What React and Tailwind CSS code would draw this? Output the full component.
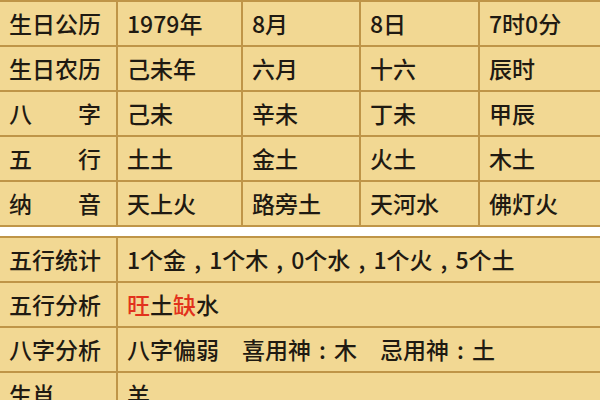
import React from "react";

const top = [
  ["生日公历", "1979年", "8月", "8日", "7时0分"],
  ["生日农历", "己未年", "六月", "十六", "辰时"],
  [["八", "字"], "己未", "辛未", "丁未", "甲辰"],
  [["五", "行"], "土土", "金土", "火土", "木土"],
  [["纳", "音"], "天上火", "路旁土", "天河水", "佛灯火"],
];

function Label({ v }) {
  if (Array.isArray(v)) {
    return (
      <div className="flex h-full items-center justify-between bg-[#f2d893] pl-[9px] pr-[15px]">
        <span>{v[0]}</span>
        <span>{v[1]}</span>
      </div>
    );
  }
  return <div className="flex h-full items-center bg-[#f2d893] pl-[9px]">{v}</div>;
}

function Cell({ children }) {
  return <div className="flex h-full items-center bg-[#f2d893] pl-[9px] whitespace-nowrap">{children}</div>;
}

function P({ c }) {
  return <span className="inline-block w-[1em] text-center">{c}</span>;
}

export default function App() {
  return (
    <div
      className="h-[400px] w-[600px] overflow-hidden bg-white text-[23px] font-medium leading-none text-[#1f1a12]"
      style={{ fontFamily: '"Noto Sans CJK SC", "Noto Sans", sans-serif' }}
    >
      <div className="grid grid-cols-[116px_123px_116px_117px_1fr] auto-rows-[43px] gap-[2px] border-y-2 border-[#bf9548] bg-[#bf9548]">
        {top.map((row, i) => (
          <React.Fragment key={i}>
            <Label v={row[0]} />
            {row.slice(1).map((c, j) => (
              <Cell key={j}>{c}</Cell>
            ))}
          </React.Fragment>
        ))}
      </div>
      <div className="h-[9px]" />
      <div className="grid grid-cols-[116px_1fr] auto-rows-[43px] gap-[2px] border-t-2 border-[#bf9548] bg-[#bf9548]">
        <Label v="五行统计" />
        <Cell>
          1个金<P c="," />1个木<P c="," />0个水<P c="," />1个火<P c="," />5个土
        </Cell>
        <Label v="五行分析" />
        <Cell>
          <span className="text-[#e2321c]">旺</span>土<span className="text-[#e2321c]">缺</span>水
        </Cell>
        <Label v="八字分析" />
        <Cell>
          八字偏弱<P c="" />喜用神<P c=":" />木<P c="" />忌用神<P c=":" />土
        </Cell>
        <Label v="生肖" />
        <Cell>羊</Cell>
      </div>
    </div>
  );
}
